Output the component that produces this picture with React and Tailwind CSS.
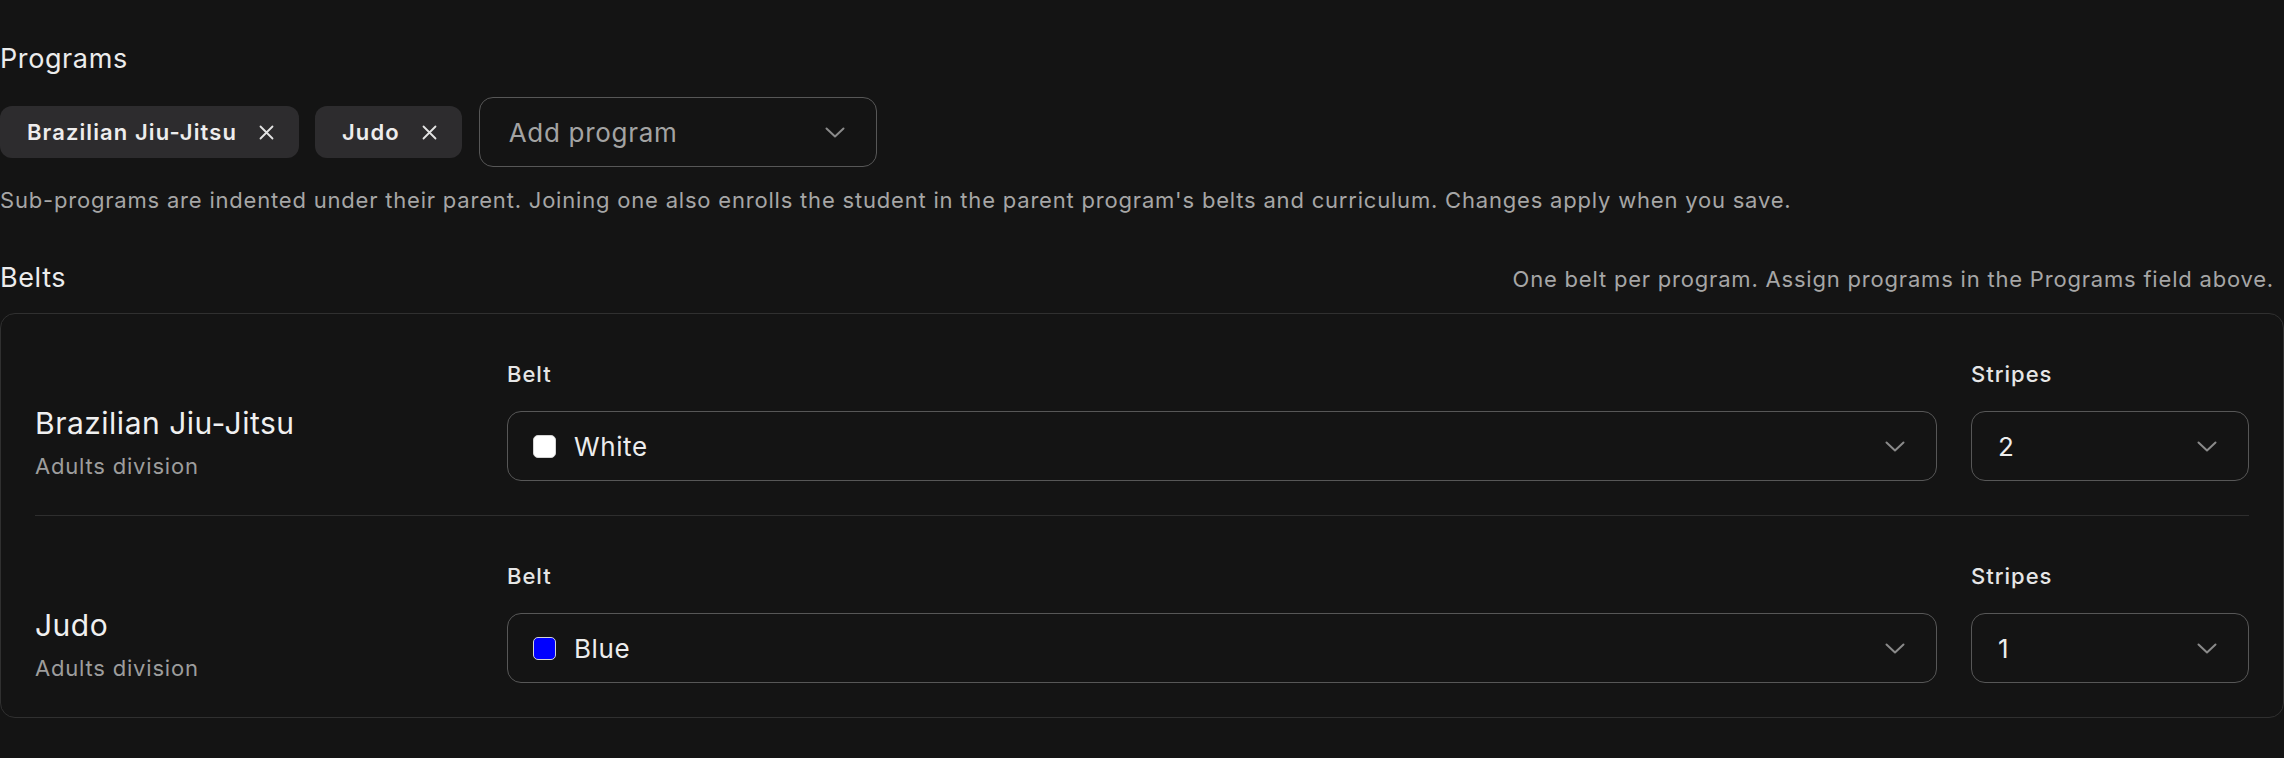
import React from 'react';

const Chevron = () => (
  <svg width="20" height="11" viewBox="0 0 20 11" fill="none" className="shrink-0">
    <polyline points="1.5,1.5 10,9.5 18.5,1.5" stroke="#8a8a8a" strokeWidth="2" strokeLinecap="round" strokeLinejoin="round" />
  </svg>
);

const Cross = () => (
  <svg width="15" height="15" viewBox="0 0 15 15" fill="none" className="shrink-0">
    <path d="M1.5 1.5 L13.5 13.5 M13.5 1.5 L1.5 13.5" stroke="#e4e4e4" strokeWidth="1.8" strokeLinecap="round" />
  </svg>
);

const Chip = ({ label }) => (
  <div className="flex h-[52px] items-center gap-[22px] rounded-[12px] bg-[#2d2c2e] pl-[27px] pr-[25px]">
    <span className="text-[22px] font-semibold tracking-[1.1px] text-[#ededed]">{label}</span>
    <Cross />
  </div>
);

const Select = ({ children, className = '' }) => (
  <div className={`flex h-[70px] items-center justify-between rounded-[14px] border-[1.5px] border-[#575757] pr-[31px] ${className}`}>
    <div className="flex items-center">{children}</div>
    <Chevron />
  </div>
);

const programs = [
  { name: 'Brazilian Jiu-Jitsu', belt: 'White', swatch: 'bg-[#ffffff]', stripes: '2' },
  { name: 'Judo', belt: 'Blue', swatch: 'bg-[#0000ff]', stripes: '1' },
];

export default function App() {
  return (
    <div className="min-h-screen bg-[#141414] pt-[41px] font-['Inter',sans-serif] text-[#ececec]">
      <div className="text-[27px] leading-[36px] tracking-[0.6px]">Programs</div>

      <div className="mt-[20px] flex items-center gap-[16px]">
        <Chip label="Brazilian Jiu-Jitsu" />
        <Chip label="Judo" />
        <Select className="ml-[1px] w-[398px] pl-[29px]">
          <span className="text-[26px] tracking-[0.7px] text-[#a3a3a3]">Add program</span>
        </Select>
      </div>

      <p className="mt-[18px] text-[22px] leading-[30px] tracking-[0.8px] text-[#a6a6a6]">
        Sub-programs are indented under their parent. Joining one also enrolls the student in the parent program's belts and curriculum. Changes apply when you save.
      </p>

      <div className="mt-[45px] flex items-baseline justify-between pr-[10px]">
        <div className="text-[27px] leading-[36px] tracking-[0.6px]">Belts</div>
        <div className="text-[22px] leading-[30px] tracking-[0.8px] text-[#a6a6a6]">
          One belt per program. Assign programs in the Programs field above.
        </div>
      </div>

      <div className="mt-[17px] rounded-[15px] border border-[#303030] px-[34px]">
        {programs.map((p, i) => (
          <div
            key={p.name}
            className={`flex items-end gap-[34px] pt-[45px] pb-[34px] ${i === 0 ? 'border-b border-[#2e2e2e]' : ''}`}
          >
            <div className="w-[438px] shrink-0">
              <div className="text-[30px] leading-[36px] tracking-[0.5px] text-[#f0f0f0]">{p.name}</div>
              <div className="mt-[11px] text-[22px] leading-[29px] tracking-[0.8px] text-[#9d9d9d]">Adults division</div>
            </div>
            <div className="flex-1">
              <div className="mb-[22px] text-[22px] font-medium leading-[30px] tracking-[1px] text-[#e6e6e6]">Belt</div>
              <Select className="pl-[25px]">
                <span className={`h-[23px] w-[23px] rounded-[5px] border-[1.5px] border-[#d4d4d4] ${p.swatch}`} />
                <span className="ml-[18px] text-[26px] tracking-[0.6px] text-[#ededed]">{p.belt}</span>
              </Select>
            </div>
            <div className="w-[278px] shrink-0">
              <div className="mb-[22px] text-[22px] font-medium leading-[30px] tracking-[1px] text-[#e6e6e6]">Stripes</div>
              <Select className="pl-[26px]">
                <span className="text-[26px] tracking-[0.6px] text-[#ededed]">{p.stripes}</span>
              </Select>
            </div>
          </div>
        ))}
      </div>
    </div>
  );
}
